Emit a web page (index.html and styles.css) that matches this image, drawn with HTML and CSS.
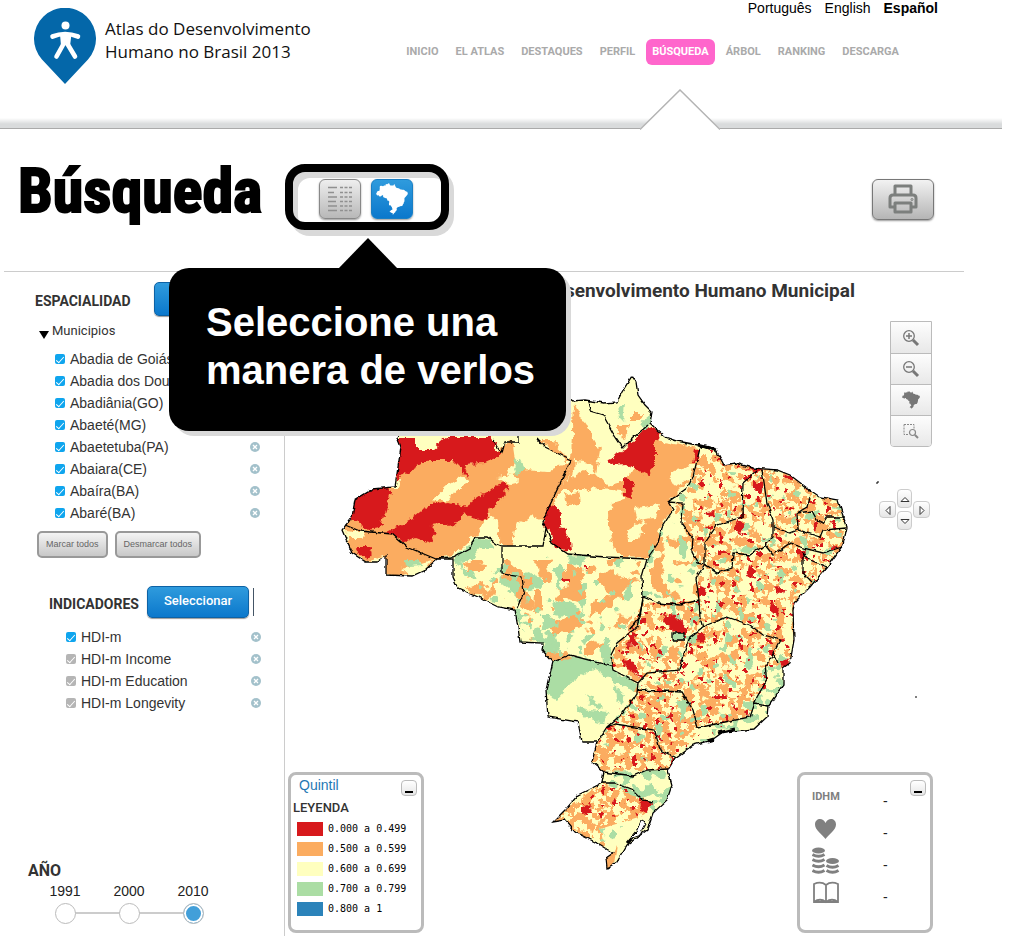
FILE: index.html
```html
<!DOCTYPE html>
<html lang="es">
<head>
<meta charset="utf-8">
<meta name="viewport" content="width=device-width, initial-scale=1">
<title>Atlas do Desenvolvimento Humano no Brasil 2013 - Búsqueda</title>
<link rel="stylesheet" href="styles.css">
</head>
<body>
<svg class="defs" width="0" height="0" aria-hidden="true">
  <defs>
    <path id="country" d="M397 437L403 425 400 408 425 404 452 412 470 400 500 396 492 376 520 380 540 366 556 374 560 392 573 401 585 400 604 403 617 402 622 392 632 376 636 382 638 395 645 405 652 412 650 423 657 430 665 437 677 441 698 445 717 452 724 465 735 463 753 468 777 470 790 475 807 488 820 497 838 500 842 513 847 527 843 545 827 567 810 587 795 602 793 610 794 640 790 663 783 668 783 685 768 706 767 717 754 729 723 732 712 740 693 745 675 758 668 770 672 785 667 800 653 813 647 830 627 845 617 862 607 868 606 858 613 853 595 842 575 832 565 820 553 822 567 808 578 795 602 783 604 772 592 762 597 742 582 742 578 722 548 717 546 690 553 662 542 650 543 643 520 642 518 627 515 610 498 607 478 597 458 588 453 577 453 559 437 559 425 570 412 576 386 575 386 555 377 562 366 562 352 553 342 530 352 517 355 500 373 489 395 487 401 447Z"/>
    <symbol id="brazil" viewBox="340 362 510 510"><use href="#country"/></symbol>
    <symbol id="close" viewBox="0 0 10 10"><circle cx="5" cy="5" r="5" fill="#a3c1cb"/><path d="M3 3l4 4M7 3L3 7" stroke="#fff" stroke-width="1.3"/></symbol>
  </defs>
</svg>

<header class="header">
  <a class="logo" href="#">
    <svg width="62" height="76" viewBox="0 0 62 76" aria-hidden="true">
      <path d="M31 76L8 51.500A31 31 0 1 1 54 51.500Z" fill="#0467a9"/>
      <circle cx="31.500" cy="17.500" r="4" fill="#fff"/>
      <path d="M18.500 28.500Q31 23.500 44 28.500M29.500 36L22.500 48.500M33.500 36L41 48.500" fill="none" stroke="#fff" stroke-width="4.600" stroke-linecap="round" stroke-linejoin="round"/>
      <path d="M26 26H37.500L36 38H33L31.500 36.500L30 38H27Z" fill="#fff"/>
    </svg>
    <span>Atlas do Desenvolvimento<br>Humano no Brasil 2013</span>
  </a>
  <div class="header-right">
    <div class="langs"><a href="#">Português</a><a href="#">English</a><a href="#" class="current">Español</a></div>
    <nav class="nav">
      <a href="#">INICIO</a><a href="#">EL ATLAS</a><a href="#">DESTAQUES</a><a href="#">PERFIL</a>
      <a href="#" class="active">BÚSQUEDA<svg class="notch" width="80" height="42" viewBox="0 0 80 42" aria-hidden="true"><path d="M0 42V40L40 1 80 40V42Z" fill="#fff"/><path d="M0 40.500L40 1 80 40.500" fill="none" stroke="#b4b4b4" stroke-width="1.500"/></svg></a>
      <a href="#">ÁRBOL</a><a href="#">RANKING</a><a href="#">DESCARGA</a>
    </nav>
  </div>
</header>

<main>
  <section class="hero">
    <h1>Búsqueda</h1>
    <div class="views">
      <button class="view" aria-label="Tabla">
        <svg width="26" height="26" viewBox="0 0 26 26" stroke="#909090" stroke-width="1.600"><path d="M1 1.500H10M1 6.500H7M1 11H10M1 15.500H9M1 20H10M1 24.500H10" /><path d="M13 1.500H25M13 6.500H25M13 11H25M13 15.500H25M13 20H25M13 24.500H25" stroke-dasharray="3 1.500"/></svg>
      </button>
      <button class="view selected" aria-label="Mapa"><svg width="32" height="32" fill="#fff"><use href="#brazil"/></svg></button>
      <div class="callout" role="tooltip">Seleccione una manera de verlos</div>
    </div>
    <button class="print" aria-label="Imprimir">
      <svg width="30" height="30" viewBox="0 0 30 30" fill="none" stroke="#7c7f7d" stroke-width="3" stroke-linejoin="round"><path d="M7 11V2H23V11M7 23H2V14Q2 11 5 11H25Q28 11 28 14V23H23"/><path d="M7 19H23V28H7Z"/><circle cx="24" cy="15.500" r="1" stroke-width="1"/></svg>
    </button>
  </section>

  <div class="content">
    <aside class="sidebar">
      <div class="group-head"><h3>ESPACIALIDAD</h3><button class="select" aria-label="Seleccionar"></button></div>
      <button class="tree"><span class="caret"></span>Municipios</button>
      <ul class="checks">
        <li><label><input type="checkbox" checked>Abadia de Goiás</label><button aria-label="Quitar"><svg width="10" height="10"><use href="#close"/></svg></button></li>
        <li><label><input type="checkbox" checked>Abadia dos Dourados</label><button aria-label="Quitar"><svg width="10" height="10"><use href="#close"/></svg></button></li>
        <li><label><input type="checkbox" checked>Abadiânia(GO)</label><button aria-label="Quitar"><svg width="10" height="10"><use href="#close"/></svg></button></li>
        <li><label><input type="checkbox" checked>Abaeté(MG)</label><button aria-label="Quitar"><svg width="10" height="10"><use href="#close"/></svg></button></li>
        <li><label><input type="checkbox" checked>Abaetetuba(PA)</label><button aria-label="Quitar"><svg width="10" height="10"><use href="#close"/></svg></button></li>
        <li><label><input type="checkbox" checked>Abaiara(CE)</label><button aria-label="Quitar"><svg width="10" height="10"><use href="#close"/></svg></button></li>
        <li><label><input type="checkbox" checked>Abaíra(BA)</label><button aria-label="Quitar"><svg width="10" height="10"><use href="#close"/></svg></button></li>
        <li><label><input type="checkbox" checked>Abaré(BA)</label><button aria-label="Quitar"><svg width="10" height="10"><use href="#close"/></svg></button></li>
      </ul>
      <div class="bulk"><button>Marcar todos</button><button>Desmarcar todos</button></div>

      <div class="group-head indicators"><h3>INDICADORES</h3><button class="select">Seleccionar</button><span class="divider"></span></div>
      <ul class="checks nested">
        <li><label><input type="checkbox" checked>HDI-m</label><button aria-label="Quitar"><svg width="10" height="10"><use href="#close"/></svg></button></li>
        <li><label><input type="checkbox">HDI-m Income</label><button aria-label="Quitar"><svg width="10" height="10"><use href="#close"/></svg></button></li>
        <li><label><input type="checkbox">HDI-m Education</label><button aria-label="Quitar"><svg width="10" height="10"><use href="#close"/></svg></button></li>
        <li><label><input type="checkbox">HDI-m Longevity</label><button aria-label="Quitar"><svg width="10" height="10"><use href="#close"/></svg></button></li>
      </ul>

      <fieldset class="years">
        <legend>AÑO</legend>
        <div class="year-row">
          <label>1991<input type="radio" name="year"></label>
          <label>2000<input type="radio" name="year"></label>
          <label>2010<input type="radio" name="year" checked></label>
        </div>
      </fieldset>
    </aside>

    <section class="map">
      <h2>Índice de Desenvolvimento Humano Municipal</h2>
      <svg class="brazil-map" width="648" height="560" viewBox="285 320 648 560" role="img" aria-label="Mapa de Brasil por municipio">
        <defs>
          <clipPath id="land"><use href="#country"/></clipPath>
          <filter id="rough" x="0" y="0" width="100%" height="100%" color-interpolation-filters="sRGB"><feTurbulence type="fractalNoise" baseFrequency=".13" numOctaves="2" seed="4"/><feDisplacementMap in="SourceGraphic" scale="8" xChannelSelector="R" yChannelSelector="G"/></filter>
          <filter id="edge" filterUnits="userSpaceOnUse" x="285" y="320" width="648" height="560" color-interpolation-filters="sRGB"><feTurbulence type="fractalNoise" baseFrequency=".15" numOctaves="2" seed="9"/><feDisplacementMap in="SourceGraphic" scale="4" xChannelSelector="R" yChannelSelector="G"/></filter>
          <filter id="orange" x="0" y="0" width="100%" height="100%" color-interpolation-filters="sRGB"><feTurbulence type="fractalNoise" baseFrequency=".13" numOctaves="3" seed="3"/><feColorMatrix values="0 0 0 0 .984  0 0 0 0 .675  0 0 0 0 .376  40 0 0 0 -18.800"/><feComposite in2="SourceGraphic" operator="in"/></filter>
          <filter id="orange-sparse" x="0" y="0" width="100%" height="100%" color-interpolation-filters="sRGB"><feTurbulence type="fractalNoise" baseFrequency=".06" numOctaves="3" seed="12"/><feColorMatrix values="0 0 0 0 .984  0 0 0 0 .675  0 0 0 0 .376  40 0 0 0 -22.400"/><feComposite in2="SourceGraphic" operator="in"/></filter>
          <filter id="yellow" x="0" y="0" width="100%" height="100%" color-interpolation-filters="sRGB"><feTurbulence type="fractalNoise" baseFrequency=".05" numOctaves="3" seed="22"/><feColorMatrix values="0 0 0 0 1  0 0 0 0 1  0 0 0 0 .749  0 40 0 0 -22.800"/><feComposite in2="SourceGraphic" operator="in"/></filter>
          <filter id="green" x="0" y="0" width="100%" height="100%" color-interpolation-filters="sRGB"><feTurbulence type="fractalNoise" baseFrequency=".09" numOctaves="2" seed="31"/><feColorMatrix values="0 0 0 0 .671  0 0 0 0 .867  0 0 0 0 .643  40 0 0 0 -25.600"/><feComposite in2="SourceGraphic" operator="in"/></filter>
          <filter id="green-dense" x="0" y="0" width="100%" height="100%" color-interpolation-filters="sRGB"><feTurbulence type="fractalNoise" baseFrequency=".09" numOctaves="2" seed="7"/><feColorMatrix values="0 0 0 0 .671  0 0 0 0 .867  0 0 0 0 .643  40 0 0 0 -20"/><feComposite in2="SourceGraphic" operator="in"/></filter>
          <filter id="red" x="0" y="0" width="100%" height="100%" color-interpolation-filters="sRGB"><feTurbulence type="fractalNoise" baseFrequency=".16" numOctaves="2" seed="15"/><feColorMatrix values="0 0 0 0 .843  0 0 0 0 .098  0 0 0 0 .11  0 40 0 0 -26.800"/><feComposite in2="SourceGraphic" operator="in"/></filter>
        </defs>
        <g filter="url(#edge)">
          <g clip-path="url(#land)">
            <path fill="#ffffbf" d="M335 360H860V875H335Z"/>
            <g filter="url(#rough)">
              <path fill="#fbac60" d="M340 515L395 482 395 455 440 458 470 464 490 455 505 445 512 440 515 460 505 475 525 470 545 472 560 466 571 462 568 478 556 500 545 520 541 520 530 516 516 525 512 546 500 546 497 522 490 514 475 535 455 553 437 559 425 570 400 576 386 575 386 555 366 562 350 553 344 525Z"/>
              <path fill="#ffffbf" d="M393 480L400 479 398 488 393 488ZM345 530L368 532 362 538 347 538ZM432 500L448 485 464 475 468 482 455 492 447 502ZM497 477L513 474 520 482 512 484Z"/>
              <path fill="#ffffbf" d="M418 438L440 438 428 452 416 452ZM402 568L432 560 425 570 412 577Z"/>
              <path fill="#d7191c" d="M397 438L416 438 416 450 432 450 447 437 490 437 502 455 484 463 462 464 470 480 459 467 452 460 430 460 412 470 397 480Z"/>
              <path fill="#d7191c" d="M340 520L345 500 373 485 392 489 386 510 380 528 366 530 358 520ZM384 533L412 519 430 505 450 502 465 506 484 493 500 486 504 480 510 487 495 505 484 521 472 519 466 512 456 524 430 526 437 533 429 543 415 538 405 543 396 536ZM354 547L373 547 368 560 358 555ZM544 515L550 504 563 510 559 524 570 540 571 552 556 548 548 530 543 521Z"/>
              <path fill="#abdda4" d="M512 460L520 458 526 470 518 475ZM405 560L420 560 423 566 408 567ZM455 555L472 542 478 537 488 540 495 548 480 548 470 560 455 563ZM500 575L522 577 527 572 541 577 540 587 524 592 520 602 510 590 498 580ZM545 660L575 656 600 662 610 660 618 675 638 684 636 691 615 682 595 668 582 676 570 685 556 700 546 695ZM575 706L590 710 608 712 605 724 585 718ZM585 695L595 700 603 708 597 709ZM614 686L624 694 622 704 616 698Z"/>
              <path fill="#fbac60" d="M573 401L580 415 592 436 600 450 596 475 605 485 625 482 640 460 655 440 680 444 698 448 694 475 680 490 668 502 672 510 660 527 657 543 648 558 622 557 612 545 608 520 612 504 625 500 622 490 600 488 578 490 560 490 568 480 571 461ZM565 495L578 492 580 504 568 505ZM538 440L566 460 571 460 550 440Z"/>
              <path fill="#ffffbf" d="M575 460L590 462 596 475 583 472 573 478ZM668 472L695 465 690 480 676 486ZM635 508L660 505 655 518 638 520ZM625 532L645 520 640 540 628 540Z"/>
              <path fill="#d7191c" d="M608 458L625 450 635 438 650 426 662 434 655 445 655 465 648 476 637 470 625 465 612 466ZM624 479L632 480 633 498 624 496ZM695 449L700 449 699 462 692 462ZM560 576L575 577 573 583 561 580ZM582 566L590 566 588 571Z"/>
              <path fill="#fbac60" d="M604 580L615 575 640 580 622 590 622 600 608 592ZM632 413L643 413 642 420 632 420ZM618 425L630 425 625 440 618 435ZM462 563L486 565 484 572 470 572ZM465 588L482 582 490 594 475 595ZM502 560L512 560 515 573 504 573ZM535 590L542 590 542 610 534 612ZM555 590L580 585 585 605 570 600Z"/>
              <path fill="#abdda4" d="M617 405L625 404 623 422 619 418ZM640 425L652 415 648 428ZM543 645L552 632 560 645 552 662 542 655ZM553 600L568 603 580 608 570 618 555 615ZM569 555L586 556 580 568 568 564ZM600 645L612 643 610 665 602 662Z"/>
            </g>
            <path filter="url(#orange)" d="M694 477L700 446 870 460 860 660 783 668 765 667 767 680 757 697 750 717 700 728 668 770 604 772 590 763 597 742 623 713 638 684 613 670 610 657 643 603 660 604 699 600 698 563 682 523 683 503Z"/>
            <path filter="url(#yellow)" d="M694 477L700 446 870 460 860 660 783 668 765 667 757 697 690 700 638 684 613 670 610 657 643 603 699 600 698 563 682 523 683 503Z"/>
            <path filter="url(#orange-sparse)" d="M453 560H550L568 555 647 560 643 600 637 627 610 657 553 662 500 640ZM668 502L683 503 698 563 699 600 643 598 647 560Z"/>
            <path filter="url(#orange)" d="M550 820L602 783 625 785 650 802 645 815 600 829 612 870 560 840Z"/>
            <path filter="url(#green)" d="M453 560L568 555 647 560 658 520 700 470 860 480 850 720 670 770 597 742 640 685 553 662 500 640Z"/>
            <path filter="url(#green-dense)" d="M754 729L698 728 750 717 757 697 765 667 790 663 780 730ZM604 772L668 770 680 790 653 813 643 800 602 783ZM600 829L622 826 617 838 600 842ZM515 615H560L553 662 530 645Z"/>
            <path filter="url(#red)" d="M694 477L700 446 870 460 860 660 783 668 757 697 750 717 668 770 604 772 597 742 638 684 613 670 610 657 643 600 699 600 698 563Z"/>
            <path filter="url(#red)" d="M575 803L602 783 625 785 650 802 645 815 600 820Z"/>
            <g filter="url(#rough)" fill="#d7191c">
              <path d="M664 614L675 616 688 628 688 636 676 632 662 622ZM629 630L636 636 638 645 627 646ZM622 659L630 658 640 677 632 672ZM699 632L706 632 703 642 698 640ZM771 604L781 608 778 616 770 610ZM698 588L706 590 704 595 698 594ZM748 566L756 570 753 577 746 576ZM752 480L762 482 762 492 752 486ZM738 520L744 524 740 534 734 530ZM798 548L806 548 803 558 798 555ZM781 660L789 661 784 667ZM582 808L592 804 590 813 581 814ZM641 800L652 801 647 812 640 810ZM745 468L762 469 758 474ZM705 512L716 511 714 516 704 517ZM775 586L785 588 783 594 776 592Z"/>
            </g>
            <path fill="#fbac60" d="M617 845L613 870 600 870 606 858 613 853Z"/>
            <path fill="#abdda4" d="M673 633H684V640H673Z"/>
          </g>
          <g fill="none" stroke="#000" stroke-width="1.300">
            <use href="#country"/>
            <path d="M571 460L542 522 546 528 543 546H502L497 544 487 537H475L470 548 453 557 436 558M345 525L360 531 392 534 407 547 436 559M502 547V574L522 577 524 592 517 608M546 528L552 543 568 554 605 557 647 559M493 440L502 453 505 442H518V436M537 438L545 447 571 460M588 401L590 411 603 415 613 433 623 448 633 438 648 425"/>
            <path d="M700 448L693 477 687 488 668 502 673 510 662 527 658 543 647 559 642 577 643 597 640 617 630 629M668 502L683 503 682 523 693 538 692 552 698 563 705 565M757 470L743 483 742 517 717 525 705 543V565M762 470L767 503 773 520V537L765 545 750 555 733 553 732 568 717 573 705 565 696 578 699 600 700 618 703 628M643 597L658 603 680 605 699 600"/>
            <path d="M810 497L807 507 797 513 798 530 820 537 823 530 846 528M773 527L790 533 798 530M797 513L812 511 817 520 823 523 827 517 845 517M765 545L773 555 790 543 803 548 823 553 842 547M803 552L810 560 827 567M803 552V573L812 582M702 627L727 617 750 625 763 635 780 640 773 653 778 663"/>
            <path d="M643 600L637 627 617 643 610 657 613 670 638 683 637 693 623 713 607 727 597 742M553 662L570 655 600 663 613 667M638 683L647 673 680 670 685 650 690 637 703 627M673 633H684V640H673ZM637 690L660 691 682 692 693 710 698 728 720 723 750 717 757 697 767 680 765 667 773 655M768 706L755 704M607 727L615 724 655 730 660 750 675 757M604 772L633 776 647 770 668 769M602 783H615L633 790 643 800 653 802"/>
            <path stroke-width="3" d="M698 445L717 450M718 733L735 729M643 824L634 835 627 843M707 741L714 739"/>
          </g>
          <path fill="#fff" stroke="#000" d="M641 821L646 824 640 835 629 839 636 832Z"/>
        </g>
        <path d="M876 483h2v-2M915 697h2" stroke="#000" fill="none"/>
      </svg>

      <div class="tools">
        <button aria-label="Acercar"><svg width="18" height="18" viewBox="0 0 18 18" fill="none" stroke="#777"><circle cx="7" cy="7" r="5.300" stroke-width="1.300"/><path d="M4 7h6M7 4v6" stroke-width="1.500"/><path d="M11 11l5 5" stroke-width="3"/></svg></button>
        <button aria-label="Alejar"><svg width="18" height="18" viewBox="0 0 18 18" fill="none" stroke="#777"><circle cx="7" cy="7" r="5.300" stroke-width="1.300"/><path d="M4 7h6" stroke-width="1.500"/><path d="M11 11l5 5" stroke-width="3"/></svg></button>
        <button aria-label="Ver Brasil"><svg width="18" height="18" fill="#777"><use href="#brazil"/></svg></button>
        <button aria-label="Zoom de área"><svg width="18" height="18" viewBox="0 0 18 18" fill="none" stroke="#888"><path d="M2 2.500h10v4M2 2.500v10h4" stroke-dasharray="2 1"/><circle cx="10.500" cy="10.500" r="3" stroke-width="1.200"/><path d="M13 13l3 3" stroke-width="2"/></svg></button>
      </div>
      <div class="pad">
        <button class="h" aria-label="Izquierda"><svg width="10" height="12" viewBox="0 0 10 12"><path d="M7 2.500V10.500L3 6.500Z" /></svg></button>
        <div class="pad-mid">
          <button aria-label="Arriba"><svg width="12" height="10" viewBox="0 0 12 10"><path d="M2 7.500H10L6 3.500Z"/></svg></button>
          <button aria-label="Abajo"><svg width="12" height="10" viewBox="0 0 12 10"><path d="M2 3.500H10L6 7.500Z"/></svg></button>
        </div>
        <button class="h" aria-label="Derecha"><svg width="10" height="12" viewBox="0 0 10 12"><path d="M3 2.500V10.500L7 6.500Z"/></svg></button>
      </div>

      <div class="panel legend">
        <button class="min" aria-label="Minimizar"></button>
        <a href="#">Quintil</a>
        <h4>LEYENDA</h4>
        <ul>
          <li><i class="c1"></i>0.000 a 0.499</li>
          <li><i class="c2"></i>0.500 a 0.599</li>
          <li><i class="c3"></i>0.600 a 0.699</li>
          <li><i class="c4"></i>0.700 a 0.799</li>
          <li><i class="c5"></i>0.800 a 1</li>
        </ul>
      </div>

      <div class="panel stats">
        <button class="min" aria-label="Minimizar"></button>
        <dl>
          <dt>IDHM</dt><dd>-</dd>
          <dt><svg width="28" height="28" viewBox="0 0 28 28" fill="#808080" role="img" aria-label="Longevidad"><path d="M13.500 24C10 19 3 15 3 9.500C3 3 11 2 13.500 8C16 2 24 3 24 9.500C24 15 17 19 13.500 24Z"/></svg></dt><dd>-</dd>
          <dt><svg width="28" height="28" viewBox="0 0 28 28" role="img" aria-label="Renta"><g fill="#808080"><ellipse cx="6.500" cy="3.500" rx="6.500" ry="3"/><ellipse cx="20.500" cy="14" rx="6.500" ry="3"/></g><path d="M.5 7.500Q6.500 11 12.500 7.500M.5 12.500Q6.500 16 12.500 12.500M.5 18Q6.500 21.500 12.500 18M.5 23.500Q6.500 27 12.500 23.500M14.500 18.500Q20.500 22 26.500 18.500M14.500 23.500Q20.500 27 26.500 23.500" fill="none" stroke="#808080" stroke-width="3"/></svg></dt><dd>-</dd>
          <dt><svg width="28" height="28" viewBox="0 0 28 28" fill="none" stroke="#808080" stroke-width="1.800" role="img" aria-label="Educación"><path d="M14 6Q9 2 2 5V23H26V5Q19 2 14 6V23M2 23Q8 18.500 14 23Q20 18.500 26 23"/></svg></dt><dd>-</dd>
        </dl>
      </div>
    </section>
  </div>
</main>
</body>
</html>
```
FILE: styles.css
```css
* { box-sizing: border-box; }
body { margin: 0; background: #fff; color: #333; font: 14px/16px "Liberation Sans", Arial, sans-serif; }
a { color: inherit; text-decoration: none; }
button { margin: 0; padding: 0; border: 0; background: none; font: inherit; color: inherit; cursor: pointer; }
h1, h2, h3, h4, ul, dl, dd { margin: 0; padding: 0; }
ul { list-style: none; }
svg { display: block; }
.defs { position: absolute; }

.header { display: flex; justify-content: space-between; align-items: flex-start; min-height: 129px; margin-right: 9px; padding: 0 64px 0 34px; border-bottom: 1px solid #aaa; background: linear-gradient(#fff, #d9dbdc 60%) bottom / 100% 10px no-repeat; }
.logo { display: flex; gap: 9px; padding-top: 8px; color: #111; font: 17px/23px "Open Sans", "Noto Sans", sans-serif; white-space: nowrap; }
.logo span { padding-top: 9px; }
.header-right { display: flex; flex-direction: column; align-items: flex-end; gap: 23px; }
.langs { display: flex; gap: 13px; color: #000; }
.current { font-weight: bold; }
.nav { display: flex; gap: 5px; margin-right: 33px; color: #aaa; font: bold 11px/26px Roboto, sans-serif; white-space: nowrap; }
.nav a { padding: 0 6px; }
.nav .active { position: relative; border-radius: 6px; background: #ff66cc; color: #fff; }
.notch { position: absolute; top: 50px; left: 50%; margin-left: -40px; }

.hero { display: flex; align-items: center; margin: 0 47px 0 4px; padding: 35px 30px 41px 14px; border-bottom: 1px solid #ccc; }
h1 { flex: 0 0 267px; align-self: flex-start; color: #000; font: bold 62px/54px "Liberation Sans Narrow", "Roboto Condensed", Roboto, sans-serif; -webkit-text-stroke: 2px #000; }
.views { position: relative; display: flex; justify-content: center; align-items: center; gap: 10px; width: 164px; height: 66px; padding: 4px 2px 0 0; border: 8px solid #000; border-radius: 20px; box-shadow: 5px 6px 0 #d9d9d9, inset 5px 6px 0 #d9d9d9; }
.view { display: grid; place-items: center; width: 42px; height: 40px; border: 1px solid #888; border-radius: 6px; background: linear-gradient(#eee, #b8b8b8); box-shadow: 0 1px 2px #999; }
.selected { border-color: #1a7fc4; background: linear-gradient(#2f9bdd, #0b78cc); }
.callout { position: absolute; z-index: 5; top: 96px; left: -124px; width: 397px; padding: 30px 20px 37px 37px; border-radius: 20px; background: #000; box-shadow: 5px 5px 0 #d9d9d9; color: #fff; font: bold 40px/48px "Liberation Sans", Arial, sans-serif; }
.callout::before { content: ""; position: absolute; top: -30px; left: 169px; border: solid transparent; border-width: 0 30px 31px; border-bottom-color: #000; }
.print { display: grid; place-items: center; width: 62px; height: 41px; margin: 4px 0 0 auto; border: 1px solid #777; border-radius: 6px; background: linear-gradient(#f2f2f2, #b5b5b5); box-shadow: 0 1px 2px #999; }

.content { display: grid; grid-template-columns: 281px 1fr; margin-left: 4px; }
.sidebar { display: flex; flex-direction: column; min-height: 664px; padding: 10px 0 12px; border-right: 1px solid #ccc; }
.group-head { display: flex; align-items: center; padding-left: 31px; }
h3 { color: #333; font: bold 14px/16px Roboto, sans-serif; }
.group-head h3 { flex: 0 0 119px; padding-top: 3px; }
.select { width: 102px; height: 34px; padding-bottom: 2px; border: 1px solid #0d62a5; border-radius: 5px; background: linear-gradient(#2f9bdd, #0b78cc); box-shadow: 0 1px 1px #999; color: #fff; font: 500 13px/16px Roboto, sans-serif; }
.tree { display: flex; align-items: center; gap: 3px; margin: 7px 0 0 35px; font: 13px/16px Roboto, sans-serif; }
.caret { margin-top: 8px; border: solid transparent; border-width: 8px 5px 0; border-top-color: #000; }
.checks { margin: 9px 24px 0 51px; }
.checks li { display: flex; justify-content: space-between; align-items: center; height: 22px; }
.checks label { display: flex; align-items: center; gap: 5px; white-space: nowrap; }
.checks input { appearance: none; display: grid; place-items: center; width: 10px; height: 10px; margin: 0; border-radius: 2px; background: #b5b5b5; }
.checks input::after { content: ""; width: 7px; height: 3px; border: solid #fff; border-width: 0 0 1px 1px; transform: rotate(-48deg); }
.checks input:checked { background: #0fa5ee; }
.bulk { display: flex; gap: 7px; margin: 7px 0 0 33px; }
.bulk button { padding: 0 7px; border: 2px solid #999; border-radius: 5px; background: linear-gradient(#f4f4f4, #c8c8c8); color: #666; font-size: 9px; line-height: 23px; }
.indicators { margin-top: 28px; padding-left: 45px; }
.indicators h3 { flex-basis: 98px; }
.indicators .select { height: 32px; }
.divider { width: 1px; height: 28px; margin-left: 4px; background: #456; }
.nested { margin: 8px 23px 0 62px; }

.years { min-width: 0; margin: auto 0 0; padding: 0 0 0 24px; border: 0; }
.years legend { padding: 0; font: bold 16px/20px Roboto, sans-serif; }
.year-row { display: flex; width: 168px; margin-left: 5px; color: #222; background: linear-gradient(#ccc, #ccc) 32px 31px / 128px 2px no-repeat; }
.year-row label { display: flex; flex: 0 0 64px; flex-direction: column; align-items: center; gap: 4px; padding-top: 2px; }
.year-row input { appearance: none; width: 21px; height: 21px; margin: 0; border: 1px solid #bbb; border-radius: 50%; background: #fff; }
.year-row input:checked { background: #429fd9; box-shadow: inset 0 0 0 2px #fff; }

.map { position: relative; min-width: 0; }
h2 { padding: 8px 156px 18px 0; color: #333; font: bold 19px/22px Roboto, sans-serif; text-align: right; white-space: nowrap; }
.tools { position: absolute; top: 49px; right: 79px; width: 42px; overflow: hidden; border: 1px solid #bbb; border-radius: 0 0 4px 4px; }
.tools button { display: grid; place-items: center; width: 100%; height: 31px; background: linear-gradient(#fdfdfd, #e8e8e8); }
.tools button + button { border-top: 1px solid #bbb; }
.pad { position: absolute; top: 217px; right: 81px; display: flex; align-items: center; gap: 1px; }
.pad-mid { display: grid; gap: 3px; }
.pad button, .min { display: grid; place-items: center; width: 15px; height: 19px; border: 1px solid #ccc; border-radius: 4px; background: linear-gradient(#fff, #e6e6e6); }
.pad .h { width: 17px; height: 17px; }
.pad svg { fill: #fff; stroke: #333; stroke-width: 1; }
.panel { position: absolute; bottom: 3px; width: 136px; height: 161px; border: 3px solid #bbb; border-radius: 8px; background: #fff; }
.min { position: absolute; top: 5px; right: 4px; width: 16px; height: 16px; border-color: #bbb; }
.min::after { content: ""; width: 8px; height: 2px; margin-top: 7px; background: #000; }
.legend { left: 3px; padding: 2px 0 0 6px; }
.legend a { padding-left: 2px; color: #1f78b4; }
.legend h4 { margin: 8px 0 4px -4px; font: 500 13px/14px Roboto, sans-serif; }
.legend li { display: flex; align-items: center; gap: 5px; height: 20px; color: #000; font: 10px/20px "DejaVu Sans Mono", monospace; }
.legend i { width: 26px; height: 14px; }
.c1 { background: #d7191c; }
.c2 { background: #fbac60; }
.c3 { background: #ffffbf; }
.c4 { background: #abdda4; }
.c5 { background: #2b83ba; }
.stats { right: 78px; padding: 6px 0 0 12px; }
.stats dl { display: grid; grid-template-columns: 71px 1fr; grid-auto-rows: 32px; align-items: center; }
.stats dt { color: #808080; font: bold 11px/16px Roboto, sans-serif; }
.stats dd { padding-top: 7px; color: #222; }
```
